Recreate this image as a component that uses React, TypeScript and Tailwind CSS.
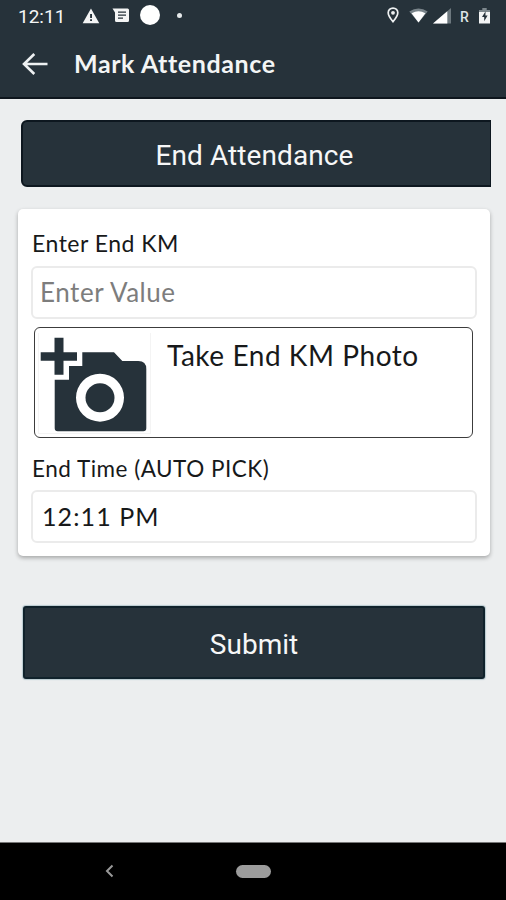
import React from "react";

const StatusBar = () => (
  <div className="h-8 flex items-center text-white shrink-0">
    <span className="ml-[18px] w-[49px] mt-px whitespace-nowrap font-[Roboto,sans-serif] text-[19px] leading-8 text-[#f4f6f6]">
      12:11
    </span>
    {/* Warning */}
    <svg className="ml-[15px]" width="18" height="16" viewBox="0 0 18 16">
      <path d="M9 0.5L17.3 15.3H0.7z" fill="#f4f5f5" />
      <path d="M8.1 6h1.9v4H8.1zM8.1 11.2h1.9v1.9H8.1z" fill="#26323a" />
    </svg>
    {/* Message */}
    <svg className="ml-3 -mt-px" width="18" height="15" viewBox="0 0 18 15">
      <path d="M0.5 0.5H15.6Q17 0.5 17 2V12.5Q17 14 15.5 14H4.5Q3 14 3 12.5V4.5z" fill="#f4f5f5" />
      <path d="M6 4.2h8M6 7.2h8M6 10.2h5" stroke="#26323a" strokeWidth="1.3" />
    </svg>
    <div className="ml-[10px] w-[20px] h-[20px] rounded-full bg-white -mt-0.5" />
    <div className="ml-[17px] w-[5px] h-[5px] rounded-full bg-[#e6eaeb] -mt-0.5" />

    {/* Location */}
    <svg className="ml-auto -mt-0.5" width="12" height="16" viewBox="0 0 12 16">
      <path
        d="M6 1.1C3.2 1.1 1.2 3.1 1.2 5.8C1.2 9.2 6 14.6 6 14.6S10.8 9.2 10.8 5.8C10.8 3.1 8.8 1.1 6 1.1z"
        fill="none"
        stroke="#eef1f2"
        strokeWidth="1.7"
      />
      <circle cx="6" cy="5.8" r="1.9" fill="#eef1f2" />
    </svg>
    {/* Wifi */}
    <svg className="ml-[10px] -mt-0.5" width="19" height="15" viewBox="0 0 19 15">
      <path d="M0.3 3.4Q9.5 -2.6 18.7 3.4L9.5 14.5z" fill="#79848a" />
      <path d="M2.6 5.2Q9.5 1.4 16.4 5.2L9.5 14.5z" fill="#fff" />
    </svg>
    {/* Signal */}
    <svg className="ml-[5px] -mt-px" width="18" height="16" viewBox="0 0 18 16">
      <path d="M18 0V15.5H0z" fill="#6d787e" />
      <path d="M14.3 3.2V15.5H0z" fill="#fff" />
    </svg>
    <span className="ml-[9px] w-[10px] mt-px font-[Roboto,sans-serif] text-[14px] leading-8 font-medium text-[#dfe4e6]">R</span>
    {/* Battery */}
    <svg className="ml-[9px] mr-[16px] -mt-px" width="11" height="16" viewBox="0 0 11 16">
      <path d="M3.3 0h4.4v2H11v3H0V2h3.3z" fill="#7d888d" />
      <path d="M0 4h11v11.5H0z" fill="#f2f4f4" />
      <path d="M6.6 3.2L3 9h2.2v4.2L8.6 7.4H6.4z" fill="#26323a" />
    </svg>
  </div>
);

const AddPhotoIcon = () => (
  <svg width="107" height="95" viewBox="0 0 107 95" fill="#26323a">
    <path d="M14.5 0.7h9v14.6H37v8.4H23.5v14h-9v-14H0.7v-8.4h13.8z" />
    <path
      fillRule="evenodd"
      d="M42.3 15.3H74L82.3 24H98.3Q106.3 24 106.3 32V91.3Q106.3 94.3 103.3 94.3H17.7Q14.7 94.3 14.7 91.3V42.7H29V29H42.3zM60 36.7a24 24 0 1 0 0 48a24 24 0 1 0 0-48z"
    />
    <circle cx="60" cy="60.7" r="14.5" />
  </svg>
);

const App = () => {
  return (
    <div className="w-[506px] h-[900px] flex flex-col bg-[#eceeef] overflow-hidden font-[Lato,sans-serif] text-[#17191a]">
      <header className="h-[99px] shrink-0 bg-[#26323a] border-b-2 border-[#0e161d]">
        <StatusBar />
        <div className="h-[64px] flex items-center">
          <svg className="ml-[22px]" width="26" height="22" viewBox="0 0 26 22" fill="none" stroke="#eef1f2" strokeWidth="2.6">
            <path d="M25.5 11H2M12.3 1L2 11L12.3 21" />
          </svg>
          <h1 className="ml-[26px] -mt-0.5 whitespace-nowrap text-[25px] leading-8 font-bold tracking-[0.6px] text-[#f3f5f5]">
            Mark Attendance
          </h1>
        </div>
      </header>

      <main className="flex-1 flex flex-col">
        <div className="mt-[21px] ml-[21px] w-[470px] h-[67px] shrink-0 flex items-center justify-center rounded-l-md bg-[#26323a] border-2 border-r border-[#0d171f]">
          <span className="mr-[4px] mt-[5px] whitespace-nowrap font-[Roboto,sans-serif] text-[28px] leading-8 tracking-[0.1px] text-[#f6f7f7]">
            End Attendance
          </span>
        </div>

        <section className="mt-[22px] ml-[18px] w-[472px] h-[347px] shrink-0 flex flex-col rounded-[5px] bg-white px-[13px] shadow-[0_2px_4px_rgba(0,0,0,0.3)]">
          <label className="h-[57px] pt-[18px] pl-px whitespace-nowrap text-[23px] leading-8 tracking-[0.5px]">
            <span>Enter End KM</span>
          </label>
          <div className="h-[53px] shrink-0 flex items-center rounded-md border-2 border-[#ebebeb] pl-[7px]">
            <span className="-mt-px whitespace-nowrap text-[26px] leading-8 tracking-[0.55px] text-[#7d7d7d]">Enter Value</span>
          </div>
          <button className="mt-[8px] ml-[3px] mr-[4px] h-[111px] shrink-0 flex items-start rounded-md border border-[#3c3c3c] text-left">
            <div className="ml-[3px] mt-[5px] w-[113px] h-[101px] shrink-0 flex pl-px pt-[4px] border border-t-0 border-[#f4f4f4]">
              <AddPhotoIcon />
            </div>
            <span className="ml-[16px] mt-[11px] whitespace-nowrap text-[28px] leading-8 tracking-[0.55px]">
              Take End KM Photo
            </span>
          </button>
          <label className="h-[52px] pt-[15px] pl-px whitespace-nowrap text-[22.5px] leading-8 tracking-[0.5px]">
            <span>End Time (AUTO PICK)</span>
          </label>
          <div className="h-[53px] shrink-0 flex items-center rounded-md border-2 border-[#ebebeb] pl-[9px]">
            <span className="-mt-[2px] whitespace-nowrap text-[25px] leading-8 tracking-[1.1px]">12:11 PM</span>
          </div>
        </section>

        <button className="mt-[50px] ml-[23px] w-[462px] h-[73px] shrink-0 flex items-center justify-center rounded-[3px] bg-[#26323a] border-2 border-[#10222b] shadow-[0_0_1px_1px_#b9c9cf]">
          <span className="mt-[5px] whitespace-nowrap font-[Roboto,sans-serif] text-[28px] leading-8 text-[#f6f7f7]">
            Submit
          </span>
        </button>
      </main>

      <nav className="h-[58px] shrink-0 flex items-center bg-black border-t border-[#777]">
        <svg className="ml-[105px] -mt-px" width="9" height="14" viewBox="0 0 9 14" fill="none" stroke="#999" strokeWidth="2">
          <path d="M7.5 1.5L2 7L7.5 12.5" />
        </svg>
        <div className="ml-[122px] -mt-px w-[35px] h-[13px] rounded-full bg-[#9c9c9c]" />
      </nav>
    </div>
  );
};

export default App;
